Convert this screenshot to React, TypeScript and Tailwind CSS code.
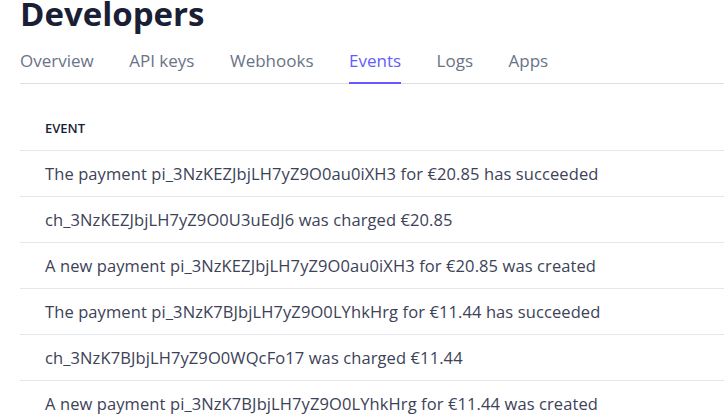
import React from 'react'

const tabs = ['Overview', 'API keys', 'Webhooks', 'Events', 'Logs', 'Apps']

const events = [
  'The payment pi_3NzKEZJbjLH7yZ9O0au0iXH3 for €20.85 has succeeded',
  'ch_3NzKEZJbjLH7yZ9O0U3uEdJ6 was charged €20.85',
  'A new payment pi_3NzKEZJbjLH7yZ9O0au0iXH3 for €20.85 was created',
  'The payment pi_3NzK7BJbjLH7yZ9O0LYhkHrg for €11.44 has succeeded',
  'ch_3NzK7BJbjLH7yZ9O0WQcFo17 was charged €11.44',
  'A new payment pi_3NzK7BJbjLH7yZ9O0LYhkHrg for €11.44 was created',
]

export default function App() {
  return (
    <div className="h-[420px] w-[724px] overflow-hidden bg-white pl-5 font-['Open_Sans',sans-serif]">
      {/* Title */}
      <h1 className="mt-[-6px] text-[33px] font-bold leading-[40px] text-[#1a1f36]">Developers</h1>

      {/* Tabs */}
      <nav className="mt-[15px] flex gap-[35.5px] border-b border-[#dcdfe5]">
        {tabs.map((t) => (
          <a
            key={t}
            className={`-mb-px border-b-2 pb-[9px] text-[17px] leading-6 ${
              t === 'Events'
                ? 'border-[#635bff] text-[#635bff]'
                : 'border-transparent text-[#697386]'
            }`}
          >
            {t}
          </a>
        ))}
      </nav>

      {/* Events table */}
      <div>
        <div className="border-b border-[#e3e8ee] pb-[14px] pl-[25px] pt-[36px] text-[13px] font-semibold uppercase leading-4 text-[#1a1f36]">
          Event
        </div>
        {events.map((e, i) => (
          <div
            key={i}
            className="border-b border-[#e3e8ee] pb-[10px] pl-[25px] pt-[11px] text-[16.5px] leading-6 tracking-[0.1px] whitespace-nowrap text-[#3c4257]"
          >
            {e}
          </div>
        ))}
      </div>
    </div>
  )
}
